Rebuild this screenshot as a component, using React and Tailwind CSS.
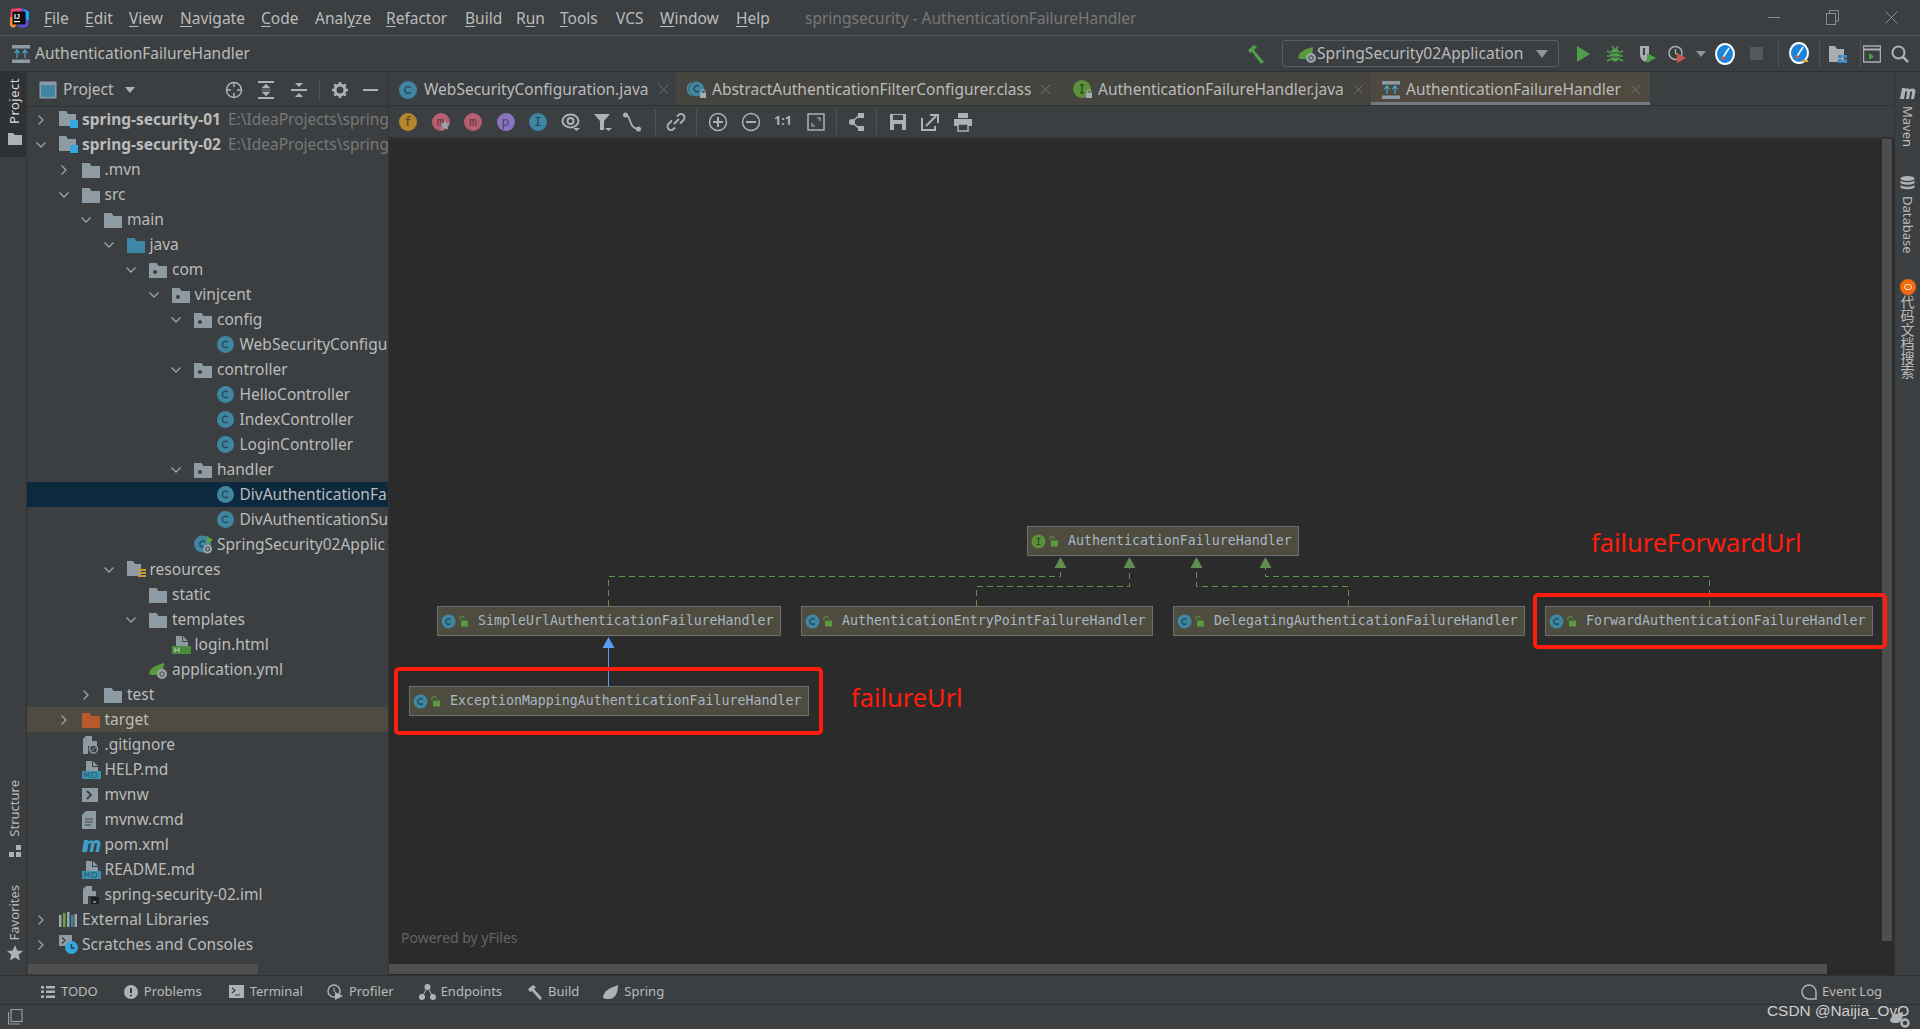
import React from 'react';

const F = { sans: "font-['Noto_Sans','Open_Sans',sans-serif]" };

function Svg({ w = 18, h = 18, vb, children, className = '' }) {
  return (
    <svg width={w} height={h} viewBox={vb || `0 0 ${w} ${h}`} className={`shrink-0 ${className}`}>
      {children}
    </svg>
  );
}

const Chevron = ({ open }) => (
  <Svg w={12} h={12}>
    <path d={open ? 'M1.5 3.5 L6 8 L10.5 3.5' : 'M3.5 1.5 L8 6 L3.5 10.5'} fill="none" stroke="#a0a3a5" strokeWidth="1.3" />
  </Svg>
);

const FolderShape = ({ fill = '#8f9ba3', dot }) => (
  <Svg w={18} h={16}>
    <path d="M0 1h7.5l2 3H18v12H0z" fill={fill} />
    {dot && <circle cx="6" cy="10" r="2" fill="#3c3f41" />}
  </Svg>
);

const ClassC = ({ d = 17, fill = '#3f86a3', letter = '#2b4a58' }) => (
  <Svg w={d} h={d} vb="0 0 17 17">
    <circle cx="8.5" cy="8.5" r="8.5" fill={fill} />
    <path d="M11 6.4 A3.2 3.2 0 1 0 11 10.6" fill="none" stroke={letter} strokeWidth="1.4" />
  </Svg>
);

const DocShape = ({ fill = '#8f9ba3' }) => (
  <path d="M4 0h6v6h6v5H4z M11 0l5 5h-5z" fill={fill} />
);

function TreeIcon({ n }) {
  switch (n) {
    case 'module':
      return (
        <Svg w={20} h={18}>
          <path d="M0 0h7l2 3h8v12H0z" fill="#8f9ba3" />
          <rect x="11" y="9" width="8" height="8" fill="#35a7dc" />
        </Svg>
      );
    case 'folder':
      return <FolderShape />;
    case 'pkg':
      return <FolderShape dot />;
    case 'java':
      return <FolderShape fill="#3f87a6" />;
    case 'target':
      return <FolderShape fill="#b8592c" />;
    case 'class':
      return <ClassC />;
    case 'app':
      return (
        <Svg w={19} h={19}>
          <circle cx="8.5" cy="9" r="8.5" fill="#3f86a3" />
          <path d="M11 7 A3 3 0 1 0 11 11" fill="none" stroke="#2b4a58" strokeWidth="1.4" />
          <path d="M13 1l6 4-6 4z" fill="#59a83a" />
          <circle cx="13.5" cy="14" r="4.5" fill="#9aa5ad" />
          <circle cx="13.5" cy="14" r="2" fill="none" stroke="#3c3f41" />
        </Svg>
      );
    case 'res':
      return (
        <Svg w={19} h={18}>
          <path d="M0 0h6l2 3h6v12H0z" fill="#8f9ba3" />
          <path d="M11 8h8v2h-8zM11 11h8v2h-8zM11 14h8v2h-8z" fill="#c59a3c" />
        </Svg>
      );
    case 'html':
      return (
        <Svg w={19} h={18}>
          <DocShape />
          <rect x="0" y="10" width="19" height="8" fill="#4b8a3a" />
          <path d="M3 11.5v5M7 11.5v5M3 14h4" stroke="#bcd6b0" strokeWidth="1" />
        </Svg>
      );
    case 'spring':
      return (
        <Svg w={19} h={18}>
          <path d="M0 13C1 6 8 4 15 2c0 7-3 12-9 12-2 0-4 0-6-1z" fill="#5a9a3c" />
          <circle cx="13" cy="13" r="5" fill="#9aa5ad" />
          <circle cx="13" cy="13" r="2.2" fill="none" stroke="#3c3f41" />
        </Svg>
      );
    case 'ignore':
      return (
        <Svg w={17} h={18}>
          <path d="M1 3l3-3h5v5H6v13H1z" fill="#8f9ba3" />
          <path d="M5 0h5v5h5v5H5z" fill="#8f9ba3" />
          <circle cx="11.5" cy="13" r="4" fill="#3c3f41" stroke="#9aa5ad" strokeWidth="1.3" />
          <path d="M9 15.5l5-5" stroke="#9aa5ad" />
        </Svg>
      );
    case 'md':
      return (
        <Svg w={19} h={18}>
          <DocShape />
          <rect x="0" y="10" width="19" height="8" fill="#3b8fb0" />
          <path d="M3 16.5v-5l2 3 2-3v5M10 11.5v5h2.5a2.5 2.5 0 0 0 0-5z" fill="none" stroke="#2c5d72" strokeWidth="1" />
        </Svg>
      );
    case 'mvnw':
      return (
        <Svg w={16} h={14}>
          <rect width="16" height="14" fill="#8f9ba3" />
          <path d="M5 3l4 4-4 4" fill="none" stroke="#3c3f41" strokeWidth="2" />
        </Svg>
      );
    case 'txt':
      return (
        <Svg w={14} h={18}>
          <path d="M4 0h10v18H0V4z" fill="#8f9ba3" />
          <path d="M3 8h8M3 11h8M3 14h6" stroke="#3c3f41" strokeWidth="1" />
        </Svg>
      );
    case 'maven':
      return (
        <Svg w={19} h={14}>
          <path d="M0 14L2 2h4l.6 1.5C8 2 10 1.5 11 3.5 13 1.5 18.5 1 18.5 5L17 14h-3.5L15 6c0-1.5-2-1.5-2.500 0L11 14H7.500L9 6c0-1.500-2-1.500-2.500 0L5 14z" fill="#3f9ec9" />
        </Svg>
      );
    case 'iml':
      return (
        <Svg w={17} h={18}>
          <path d="M1 3l3-3h5v5H6v13H1z" fill="#8f9ba3" />
          <path d="M5 0h5v5h4v5H5v8" fill="#8f9ba3" />
          <rect x="9" y="11" width="8" height="7" fill="#1d1f20" />
          <path d="M11 16h3" stroke="#ddd" />
        </Svg>
      );
    case 'libs':
      return (
        <Svg w={18} h={15}>
          <rect x="0" y="3" width="2.500" height="12" fill="#9aa5ad" />
          <rect x="4" y="1" width="2.500" height="14" fill="#62a83e" />
          <rect x="8" y="0" width="2.500" height="15" fill="#9aa5ad" />
          <rect x="12" y="3" width="2.500" height="12" fill="#3f86a3" />
          <rect x="15.500" y="2" width="2.500" height="13" fill="#9aa5ad" />
        </Svg>
      );
    case 'scratch':
      return (
        <Svg w={19} h={19}>
          <rect x="0" y="0" width="13" height="11" fill="#8f9ba3" />
          <path d="M3 2.500l3 3-3 3" fill="none" stroke="#3c3f41" strokeWidth="1.300" />
          <circle cx="12.500" cy="12.500" r="6.500" fill="#35a7dc" />
          <path d="M12.500 9v4h3" fill="none" stroke="#1d3c4c" strokeWidth="1.300" />
        </Svg>
      );
    default:
      return null;
  }
}

const tree = [
  { d: 0, c: 'closed', i: 'module', t: 'spring-security-01', bold: true, path: 'E:\\IdeaProjects\\spring' },
  { d: 0, c: 'open', i: 'module', t: 'spring-security-02', bold: true, path: 'E:\\IdeaProjects\\spring' },
  { d: 1, c: 'closed', i: 'folder', t: '.mvn' },
  { d: 1, c: 'open', i: 'folder', t: 'src' },
  { d: 2, c: 'open', i: 'folder', t: 'main' },
  { d: 3, c: 'open', i: 'java', t: 'java' },
  { d: 4, c: 'open', i: 'pkg', t: 'com' },
  { d: 5, c: 'open', i: 'pkg', t: 'vinjcent' },
  { d: 6, c: 'open', i: 'pkg', t: 'config' },
  { d: 7, i: 'class', t: 'WebSecurityConfigu' },
  { d: 6, c: 'open', i: 'pkg', t: 'controller' },
  { d: 7, i: 'class', t: 'HelloController' },
  { d: 7, i: 'class', t: 'IndexController' },
  { d: 7, i: 'class', t: 'LoginController' },
  { d: 6, c: 'open', i: 'pkg', t: 'handler' },
  { d: 7, i: 'class', t: 'DivAuthenticationFa', sel: true },
  { d: 7, i: 'class', t: 'DivAuthenticationSu' },
  { d: 6, i: 'app', t: 'SpringSecurity02Applic' },
  { d: 3, c: 'open', i: 'res', t: 'resources' },
  { d: 4, i: 'folder', t: 'static' },
  { d: 4, c: 'open', i: 'folder', t: 'templates' },
  { d: 5, i: 'html', t: 'login.html' },
  { d: 4, i: 'spring', t: 'application.yml' },
  { d: 2, c: 'closed', i: 'folder', t: 'test' },
  { d: 1, c: 'closed', i: 'target', t: 'target', ex: true },
  { d: 1, i: 'ignore', t: '.gitignore' },
  { d: 1, i: 'md', t: 'HELP.md' },
  { d: 1, i: 'mvnw', t: 'mvnw' },
  { d: 1, i: 'txt', t: 'mvnw.cmd' },
  { d: 1, i: 'maven', t: 'pom.xml' },
  { d: 1, i: 'md', t: 'README.md' },
  { d: 1, i: 'iml', t: 'spring-security-02.iml' },
  { d: 0, c: 'closed', i: 'libs', t: 'External Libraries' },
  { d: 0, c: 'closed', i: 'scratch', t: 'Scratches and Consoles' },
];

function TreeRow({ r }) {
  const bg = r.sel ? 'bg-[#0d293e]' : r.ex ? 'bg-[#4f4b41]' : '';
  return (
    <div className={`flex h-[25px] items-center overflow-hidden whitespace-nowrap ${bg}`} style={{ paddingLeft: 8 + r.d * 22.5 }}>
      <div className="flex w-[24px] shrink-0 items-center">{r.c && <Chevron open={r.c === 'open'} />}</div>
      <div className="flex w-[23px] shrink-0 items-center justify-start">
        <TreeIcon n={r.i} />
      </div>
      <span className={r.bold ? 'font-bold text-[#bbbbbb]' : 'text-[#bbbbbb]'}>{r.t}</span>
      {r.path && <span className="ml-[7px] text-[#787878]">{r.path}</span>}
    </div>
  );
}

const menus = [
  ['w-[41px]', '', 'F', 'ile'],
  ['w-[44px]', '', 'E', 'dit'],
  ['w-[51px]', '', 'V', 'iew'],
  ['w-[81px]', '', 'N', 'avigate'],
  ['w-[54px]', '', 'C', 'ode'],
  ['w-[71px]', 'Anal', 'y', 'ze'],
  ['w-[79px]', '', 'R', 'efactor'],
  ['w-[51px]', '', 'B', 'uild'],
  ['w-[44px]', 'R', 'u', 'n'],
  ['w-[56px]', '', 'T', 'ools'],
  ['w-[44px]', 'VCS', '', ''],
  ['w-[76px]', '', 'W', 'indow'],
  ['w-[69px]', '', 'H', 'elp'],
];

const Logo = () => (
  <Svg w={20} h={20}>
    <path d="M2 1l9-1 3 3-6 5-7 3z" fill="#f2416f" />
    <path d="M1 10l5-3 3 8-4 5-4-2z" fill="#fb8a2e" />
    <path d="M12 0l8 3-1 15-6 2-5-2 5-10z" fill="#5a4fe0" />
    <path d="M15 1l5 3v9l-4-3z" fill="#1ea7e8" />
    <rect x="3.500" y="3.500" width="13" height="13" fill="#0d0d0d" />
    <text x="5" y="10.500" fill="#fff" fontSize="7" fontWeight="700" fontFamily="Liberation Sans">IJ</text>
    <rect x="5" y="13" width="6" height="1.200" fill="#fff" />
  </Svg>
);

const HierarchyIcon = () => (
  <Svg w={18} h={18}>
    <rect x="0" y="0" width="18" height="3.500" fill="#8f9ba3" />
    <rect x="0" y="14.500" width="18" height="3.500" fill="#8f9ba3" />
    <path d="M5 13V6M2.500 8L5 5l2.500 3M13 13V6M10.500 8L13 5l2.500 3" fill="none" stroke="#3fa7d0" strokeWidth="1.200" />
  </Svg>
);

const TabClose = ({ c = '#6f7274' }) => (
  <Svg w={11} h={11} className="ml-[9px]">
    <path d="M1 1l9 9M10 1l-9 9" stroke={c} strokeWidth="1" />
  </Svg>
);

const LockDot = () => (
  <g>
    <rect x="13" y="13" width="6" height="5" fill="#a5adb3" />
    <path d="M14 13v-1.500a2 2 0 0 1 4 0V13" fill="none" stroke="#a5adb3" />
  </g>
);

function Tabs() {
  return (
    <div className="flex h-[34px] shrink-0 items-stretch border-b border-[#323232] text-[15.500px] text-[#bbbbbb]">
      <div className="flex w-[287px] items-center pl-[10px] pt-[2px]">
        <ClassC d={18} />
        <span className="ml-[7px] whitespace-nowrap">WebSecurityConfiguration.java</span>
        <TabClose />
      </div>
      <div className="flex w-[695px] items-center bg-[#45443e] pt-[2px]">
        <div className="flex w-[386px] items-center pl-[11px]">
          <Svg w={19} h={19}>
            <path d="M4 2.500A8 8 0 0 0 4 15.500" fill="none" stroke="#4a93b0" strokeWidth="1.500" />
            <circle cx="9.500" cy="9" r="7.500" fill="#3f86a3" />
            <path d="M12 6.500A3 3 0 1 0 12 11" fill="none" stroke="#2b4a58" strokeWidth="1.400" />
            <LockDot />
          </Svg>
          <span className="ml-[6px] whitespace-nowrap">AbstractAuthenticationFilterConfigurer.class</span>
          <TabClose />
        </div>
        <div className="flex items-center pl-[11px]">
          <Svg w={19} h={19}>
            <circle cx="9" cy="9" r="9" fill="#5b8f3a" />
            <path d="M7 5h4M9 5v8M7 13h4" stroke="#2f4a20" strokeWidth="1.300" />
            <LockDot />
          </Svg>
          <span className="ml-[6px] whitespace-nowrap">AuthenticationFailureHandler.java</span>
          <TabClose />
        </div>
      </div>
      <div className="flex w-[279px] items-center border-b-[3px] border-[#747a80] bg-[#4e4a3f] pl-[11px] pt-[5px]">
        <HierarchyIcon />
        <span className="ml-[6px] whitespace-nowrap">AuthenticationFailureHandler</span>
        <TabClose />
      </div>
    </div>
  );
}

const Round = ({ c, t, tc, star }) => (
  <div className="relative flex h-[20px] w-[20px] shrink-0 items-center justify-center">
    <div className={`flex h-[18px] w-[18px] items-center justify-center rounded-full font-['DejaVu_Sans_Mono',monospace] text-[13px] leading-none ${c} ${tc}`}>{t}</div>
    {star && (
      <Svg w={12} h={12} vb="8 8 12 12" className="absolute left-[8px] top-[8px]">
        <path d="M14 8l1.500 3.500 3.500.300-2.700 2.300.900 3.500-3.200-1.900-3.200 1.900.900-3.500-2.700-2.300 3.500-.300z" fill="#9aa7b0" />
      </Svg>
    )}
  </div>
);
const Sep = ({ h = 'h-[26px]', cls = '' }) => <div className={`w-px shrink-0 bg-[#515456] ${h} ${cls}`} />;
const G = '#afb1b3';

function DiagramToolbar() {
  return (
    <div className="flex h-[33px] shrink-0 items-center border-b-2 border-[#323232] pl-[9px]">
      <div className="flex items-center gap-[12.500px]">
        <Round c="bg-[#b7862e]" tc="text-[#5c4318]" t="f" />
        <Round c="bg-[#b5606e]" tc="text-[#6b3842]" t="m" star />
        <Round c="bg-[#b5606e]" tc="text-[#6b3842]" t="m" />
        <Round c="bg-[#8a74c0]" tc="text-[#4d3f72]" t="p" />
        <Round c="bg-[#3f86a3]" tc="text-[#1f4a5c]" t="I" />
        <Svg w={20} h={20}>
          <ellipse cx="9.500" cy="9" rx="8" ry="6.500" fill="none" stroke={G} strokeWidth="2" />
          <circle cx="9.500" cy="9" r="3" fill="none" stroke={G} strokeWidth="2" />
          <path d="M12 16h7l-3.500 3z" fill={G} />
        </Svg>
        <Svg w={20} h={20}>
          <path d="M1 2h16l-6 7v9H7V9z" fill={G} />
          <path d="M12 16h7l-3.500 3z" fill={G} />
        </Svg>
      </div>
      <Svg w={20} h={20} className="ml-[9px]">
        <circle cx="3.500" cy="3" r="2.500" fill={G} />
        <circle cx="16.500" cy="17" r="2.500" fill={G} />
        <path d="M3.500 3c6 0 3 14 13 14" fill="none" stroke={G} strokeWidth="1.800" />
      </Svg>
      <Sep cls="ml-[13px]" />
      <Svg w={20} h={20} className="ml-[10px]">
        <path d="M8 12l5-5M11 4.500l1.500-1.500a3.500 3.500 0 0 1 5 5L14 11.500M9 15.500L7.500 17a3.500 3.500 0 0 1-5-5L6 8.500" fill="none" stroke={G} strokeWidth="1.800" />
      </Svg>
      <Sep cls="ml-[10px]" />
      <div className="ml-[11px] flex items-center gap-[12.500px]">
        <Svg w={20} h={20}>
          <circle cx="10" cy="10" r="8.500" fill="none" stroke={G} strokeWidth="1.500" />
          <path d="M5 10h10M10 5v10" stroke={G} strokeWidth="2" />
        </Svg>
        <Svg w={20} h={20}>
          <circle cx="10" cy="10" r="8.500" fill="none" stroke={G} strokeWidth="1.500" />
          <path d="M5 10h10" stroke={G} strokeWidth="2" />
        </Svg>
        <span className={`${F.sans} flex w-[20px] justify-center text-[12.500px] font-bold text-[#afb1b3]`}>1:1</span>
        <Svg w={20} h={20}>
          <rect x="2" y="2" width="16" height="16" fill="none" stroke={G} strokeWidth="1.500" />
          <path d="M11 6h3v3M6 11v3h3" fill="none" stroke={G} strokeWidth="1.200" />
        </Svg>
      </div>
      <Sep cls="ml-[10px]" />
      <Svg w={20} h={20} className="ml-[9px]">
        <circle cx="6" cy="10" r="3" fill={G} />
        <rect x="12" y="1" width="6" height="5" fill={G} />
        <rect x="12" y="14" width="6" height="5" fill={G} />
        <path d="M6 10L13 3.500M6 10l7 6.500" stroke={G} strokeWidth="1.500" />
      </Svg>
      <Sep cls="ml-[10px]" />
      <div className="ml-[11px] flex items-center gap-[12.500px]">
        <Svg w={20} h={20}>
          <path d="M2 2h16v16H2z" fill={G} />
          <rect x="5" y="3" width="10" height="5" fill="#3c3f41" />
          <rect x="6" y="12" width="8" height="6" fill="#3c3f41" />
        </Svg>
        <Svg w={20} h={20}>
          <path d="M2 6v12h13v-4" fill="none" stroke={G} strokeWidth="2" />
          <path d="M6 14L16 4M10 3h8v8" fill="none" stroke={G} strokeWidth="2" />
        </Svg>
        <Svg w={20} h={20}>
          <rect x="5" y="1" width="10" height="5" fill={G} />
          <rect x="1" y="7" width="18" height="7" fill={G} />
          <rect x="5" y="12" width="10" height="7" fill="#3c3f41" stroke={G} strokeWidth="1.500" />
        </Svg>
      </div>
    </div>
  );
}

const NodeIcon = ({ c, letter }) => (
  <Svg w={15} h={15}>
    <circle cx="7.500" cy="7.500" r="7" fill={c} />
    {letter === 'I' ? (
      <path d="M5.500 4.500h4M7.500 4.500v6M5.500 10.500h4" stroke="#2f4a20" strokeWidth="1.100" />
    ) : (
      <path d="M9.700 5.500A2.800 2.800 0 1 0 9.700 9.500" fill="none" stroke="#234656" strokeWidth="1.200" />
    )}
  </Svg>
);
const NodeLock = () => (
  <Svg w={9} h={12} className="ml-[3px]">
    <rect x="2" y="5.500" width="7" height="6" fill="#5b9a3f" />
    <path d="M1 5V3a2 2 0 0 1 4 0v1" fill="none" stroke="#5b9a3f" />
  </Svg>
);

function Node({ pos, name, iface }) {
  return (
    <div className={`absolute flex h-[30px] items-center border border-[#6e6e6e] bg-[#4e4b3f] pl-[3px] ${pos}`}>
      <NodeIcon c={iface ? '#5b8f3a' : '#3f86a3'} letter={iface ? 'I' : 'C'} />
      <NodeLock />
      <span className="ml-[10px] whitespace-nowrap font-['DejaVu_Sans_Mono',monospace] text-[13.280px] text-[#a9b7c6]">{name}</span>
    </div>
  );
}

function Edges() {
  const dash = { fill: 'none', stroke: '#5d9347', strokeWidth: 1, strokeDasharray: '6 4' };
  const tri = (x) => `M${x} 557l6 11h-12z`;
  return (
    <svg className="absolute inset-0" width="1505" height="837" viewBox="389 139 1505 837">
      <path d="M608.500 606V576.500H1060.500V567" {...dash} />
      <path d="M976.500 606V586.500H1129.500V567" {...dash} />
      <path d="M1348.500 606V586.500H1196.500V567" {...dash} />
      <path d="M1709.500 606V576.500H1265.500V567" {...dash} />
      <path d={tri(1060.5)} fill="#5f8f4e" />
      <path d={tri(1129.5)} fill="#5f8f4e" />
      <path d={tri(1196.5)} fill="#5f8f4e" />
      <path d={tri(1265.5)} fill="#5f8f4e" />
      <path d="M608.500 646V686" stroke="#589df6" strokeWidth="1" />
      <path d="M608.500 637l6 11h-12z" fill="#589df6" />
    </svg>
  );
}

function Diagram() {
  return (
    <div className="relative flex-1 overflow-hidden bg-[#2b2b2b]">
      <Edges />
      <Node pos="left-[638px] top-[387px] w-[272px]" name="AuthenticationFailureHandler" iface />
      <Node pos="left-[48px] top-[467px] w-[344px]" name="SimpleUrlAuthenticationFailureHandler" />
      <Node pos="left-[412px] top-[467px] w-[352px]" name="AuthenticationEntryPointFailureHandler" />
      <Node pos="left-[784px] top-[467px] w-[352px]" name="DelegatingAuthenticationFailureHandler" />
      <Node pos="left-[1156px] top-[467px] w-[328px]" name="ForwardAuthenticationFailureHandler" />
      <Node pos="left-[20px] top-[547px] w-[400px]" name="ExceptionMappingAuthenticationFailureHandler" />
      <div className="absolute left-[1493px] top-0 h-[802px] w-[10px] bg-[#4e4e4e]" />
      <div className="absolute left-0 top-[825px] h-[10px] w-[1438px] bg-[#505050]" />
      <div className="absolute left-[5px] top-[528px] h-[68px] w-[429px] rounded-[5px] border-[4px] border-[#ff1d0d]" />
      <div className="absolute left-[1144px] top-[454px] h-[56px] w-[354px] rounded-[5px] border-[4px] border-[#ff1d0d]" />
      <span className="absolute left-[462px] top-[542px] font-['Noto_Sans',sans-serif] text-[25.400px] leading-[32px] text-[#ff1d0d]">failureUrl</span>
      <span className="absolute left-[1202px] top-[387px] font-['Noto_Sans',sans-serif] text-[25.400px] leading-[32px] text-[#ff1d0d]">failureForwardUrl</span>
      <span className={`${F.sans} absolute left-[12px] top-[789px] text-[14px] leading-[20px] text-[#636363]`}>Powered by yFiles</span>
    </div>
  );
}

const Gauge = ({ cls, extra }) => (
  <Svg w={20} h={extra ? 24 : 22} className={cls}>
    <ellipse cx="10" cy="11" rx="10" ry="11" fill="#ffffff" />
    <ellipse cx="10" cy="11" rx="8" ry="9" fill="#1a84dc" />
    <path d="M7 16L14 5" stroke="#fff" strokeWidth="1.500" />
    <circle cx="8" cy="15" r="1.800" fill="#d9523a" />
    {extra && <path d="M13 19h6" stroke="#e2a72e" strokeWidth="2" />}
  </Svg>
);

function NavTools() {
  return (
    <div className="ml-auto flex items-center pr-[11px]">
      <Svg w={20} h={20}>
        <path d="M1 6l6-5 3 2-3 3 10 12-3 2L5 8 3 9z" fill="#4f9f4a" />
      </Svg>
      <div className="ml-[15px] flex h-[27px] w-[277px] items-center rounded-[3px] border border-[#5a5d5f] pl-[15px]">
        <TreeIcon n="spring" />
        <span className="whitespace-nowrap text-[15.600px] text-[#bbbbbb]">SpringSecurity02Application</span>
        <Svg w={12} h={8} className="ml-auto mr-[10px]"><path d="M0 0h12L6 8z" fill="#8f9396" /></Svg>
      </div>
      <Svg w={18} h={18} className="ml-[15px]"><path d="M3 1l13 8-13 8z" fill="#4f9f4a" /></Svg>
      <Svg w={18} h={18} className="ml-[14px]">
        <ellipse cx="9" cy="10" rx="5" ry="6.500" fill="#4f9f4a" />
        <path d="M1 6l4 2M17 6l-4 2M1 11h4M17 11h-4M1 16l4-2M17 16l-4-2M6 1l2 3M12 1l-2 3" stroke="#4f9f4a" strokeWidth="1.500" />
        <path d="M4 8h10M4 12h10" stroke="#3c3f41" />
      </Svg>
      <Svg w={18} h={18} className="ml-[14px]">
        <path d="M2 1h9v8l-3 8c-4-1-6-4-6-8z" fill="#a9aeb1" />
        <path d="M6 3v7" stroke="#3c3f41" strokeWidth="2" />
        <path d="M9 8l9 5-9 5z" fill="#4f9f4a" />
      </Svg>
      <Svg w={18} h={18} className="ml-[12px]">
        <circle cx="7.500" cy="8" r="6.500" fill="none" stroke="#a9aeb1" strokeWidth="1.500" />
        <path d="M7.500 4v4l2 2" fill="none" stroke="#a9aeb1" strokeWidth="1.300" />
        <path d="M9 8l9 5-9 5z" fill="#c75450" />
      </Svg>
      <Svg w={10} h={6} className="ml-[10px]"><path d="M0 0h10L5 6z" fill="#8f9396" /></Svg>
      <Gauge cls="ml-[9px]" />
      <div className="ml-[15px] h-[13px] w-[13px] bg-[#55585a]" />
      <Sep h="h-[27px]" cls="ml-[15px]" />
      <Gauge cls="ml-[10px]" extra />
      <Sep h="h-[27px]" cls="ml-[10px]" />
      <Svg w={18} h={18} className="ml-[9px]">
        <path d="M0 1h6l2 3h7v13H0z" fill="#a9aeb1" />
        <path d="M9 10h4v3H9zM14 10h4v3h-4zM14 14h4v4h-4zM9 14h4v4H9z" fill="#3f86c7" />
      </Svg>
      <Sep h="h-[27px]" cls="ml-[13px]" />
      <Svg w={18} h={18} className="ml-[2px]">
        <rect x="0.500" y="1" width="17" height="16" fill="none" stroke="#a9aeb1" strokeWidth="1.500" />
        <path d="M1 4.500h16" stroke="#a9aeb1" strokeWidth="2" />
        <path d="M6 8l5 3.500L6 15z" fill="#4f9f4a" />
      </Svg>
      <Svg w={18} h={18} className="ml-[10px]">
        <circle cx="7.500" cy="7.500" r="6" fill="none" stroke="#afb1b3" strokeWidth="2" />
        <path d="M12 12l5 5" stroke="#afb1b3" strokeWidth="2.500" />
      </Svg>
    </div>
  );
}

function Bottom() {
  const item = 'flex items-center whitespace-nowrap';
  return (
    <div className="flex h-[29px] shrink-0 items-center border-t border-[#323232] pl-[41px] pt-[4px] text-[13px] text-[#bbbbbb]">
      <div className={item}>
        <Svg w={14} h={14}><path d="M0 1h3v2.500H0zM5 1h9v2.500H5zM0 5.500h3V8H0zM5 5.500h9V8H5zM0 10.500h3V13H0zM5 10.500h9V13H5z" fill="#afb1b3" /></Svg>
        <span className="ml-[6px]">TODO</span>
      </div>
      <div className={`${item} ml-[26px]`}>
        <Svg w={14} h={14}><circle cx="7" cy="7" r="7" fill="#afb1b3" /><path d="M7 3v5" stroke="#3c3f41" strokeWidth="2" /><circle cx="7" cy="10.500" r="1.100" fill="#3c3f41" /></Svg>
        <span className="ml-[6px]">Problems</span>
      </div>
      <div className={`${item} ml-[27px]`}>
        <Svg w={15} h={15}><rect width="15" height="13" fill="#afb1b3" /><path d="M3 3l3 2.500L3 8M6 10h5" fill="none" stroke="#3c3f41" strokeWidth="1.200" /></Svg>
        <span className="ml-[6px]">Terminal</span>
      </div>
      <div className={`${item} ml-[24px]`}>
        <Svg w={16} h={16}><circle cx="7" cy="7" r="6" fill="none" stroke="#afb1b3" strokeWidth="1.500" /><path d="M7 3.500V7l2 2" fill="none" stroke="#afb1b3" /><path d="M8 8l8 4-8 4z" fill="#afb1b3" /></Svg>
        <span className="ml-[6px]">Profiler</span>
      </div>
      <div className={`${item} ml-[25px]`}>
        <Svg w={17} h={16}><circle cx="8.500" cy="3" r="3" fill="#afb1b3" /><circle cx="3" cy="13" r="3" fill="#afb1b3" /><circle cx="14" cy="13" r="3" fill="#afb1b3" /><path d="M8.500 3L3 13M8.500 3L14 13" stroke="#afb1b3" /></Svg>
        <span className="ml-[5px]">Endpoints</span>
      </div>
      <div className={`${item} ml-[25px]`}>
        <Svg w={16} h={16}><path d="M1 5l5-4 3 2-2 2 8 9-2 2L5 7 3 8z" fill="#afb1b3" /></Svg>
        <span className="ml-[5px]">Build</span>
      </div>
      <div className={`${item} ml-[24px]`}>
        <Svg w={15} h={15}><path d="M0 13C0 6 7 3 15 0c0 8-3 14-9 14-2 0-4 0-6-1z" fill="#afb1b3" /></Svg>
        <span className="ml-[6px]">Spring</span>
      </div>
      <div className="ml-auto flex items-center pr-[38px]">
        <Svg w={16} h={16}><path d="M8 1a7 7 0 0 0 0 14h7V8a7 7 0 0 0-7-7z" fill="none" stroke="#afb1b3" strokeWidth="1.500" /></Svg>
        <span className="ml-[5px] whitespace-nowrap">Event Log</span>
      </div>
    </div>
  );
}

export default function App() {
  return (
    <div className={`${F.sans} relative flex h-[1029px] w-[1920px] flex-col overflow-hidden bg-[#3c3f41] text-[15.500px]`}>
      {/* Title bar */}
      <div className="flex h-[36px] shrink-0 items-center border-b border-[#515355] pl-[9px]">
        <Logo />
        <div className="ml-[15px] flex items-center pt-[3px]">
          {menus.map(([w, a, u, b]) => (
            <span key={a + u + b} className={`${w} whitespace-nowrap text-[#bbbbbb]`}>
              {a}
              <span className="underline underline-offset-2">{u}</span>
              {b}
            </span>
          ))}
        </div>
        <span className="whitespace-nowrap pt-[3px] text-[#787878]">springsecurity - AuthenticationFailureHandler</span>
        <div className="ml-auto flex items-center pr-[22px]">
          <div className="h-px w-[12px] bg-[#8a8d8f]" />
          <Svg w={14} h={15} className="ml-[46px]">
            <rect x="0.500" y="3.500" width="9" height="11" fill="none" stroke="#8a8d8f" />
            <path d="M3.500 3V0.500h9V11H10" fill="none" stroke="#8a8d8f" />
          </Svg>
          <Svg w={13} h={13} className="ml-[45px]"><path d="M0.500 0.500l12 12M12.500 0.500l-12 12" stroke="#8a8d8f" /></Svg>
        </div>
      </div>
      {/* Nav bar */}
      <div className="flex h-[36px] shrink-0 items-center border-b border-[#323232] pl-[12px]">
        <HierarchyIcon />
        <span className="ml-[5px] whitespace-nowrap text-[#bbbbbb]">AuthenticationFailureHandler</span>
        <NavTools />
      </div>
      {/* Main */}
      <div className="flex min-h-0 flex-1">
        {/* Left strip */}
        <div className="flex w-[27px] shrink-0 flex-col items-center border-r border-[#323232] text-[#bbbbbb]">
          <div className="flex w-full flex-col items-center bg-[#2f3234] pb-[12px] pl-[3px] pt-[6px]">
            <span className="rotate-180 text-[13px] tracking-[0.5px] text-[#d8d8d8] [writing-mode:vertical-rl]">Project</span>
            <Svg w={14} h={12} className="mt-[9px]"><path d="M0 0h5l2 2h7v10H0z" fill="#afb1b3" /></Svg>
          </div>
          <div className="mt-auto flex flex-col items-center pb-[14px] pl-[3px]">
            <span className="rotate-180 text-[13px] [writing-mode:vertical-rl]">Structure</span>
            <Svg w={14} h={13} className="mt-[8px]"><path d="M8 0h5v5H8zM1 7h5v5H1zM8 7h5v5H8z" fill="#afb1b3" /></Svg>
            <span className="mt-[27px] rotate-180 text-[13px] [writing-mode:vertical-rl]">Favorites</span>
            <Svg w={16} h={16} className="mt-[5px]"><path d="M8 0l2.300 5.500 5.700.500-4.300 3.800 1.300 5.700L8 12.500 3 15.500l1.300-5.700L0 6l5.700-.500z" fill="#afb1b3" /></Svg>
          </div>
        </div>
        {/* Project panel */}
        <div className="flex w-[362px] shrink-0 flex-col border-r border-[#323232]">
          <div className="flex h-[35px] shrink-0 items-center border-b border-[#323232] pl-[12px] pt-[2px] text-[#bbbbbb]">
            <Svg w={18} h={18}>
              <rect x="0.500" y="0.500" width="17" height="17" fill="#8f9ba3" />
              <rect x="2" y="4" width="14" height="12" fill="#3f86a3" />
            </Svg>
            <span className="ml-[6px]">Project</span>
            <Svg w={10} h={6} className="ml-[11px]"><path d="M0 0h10L5 6z" fill="#afb1b3" /></Svg>
            <Svg w={18} h={18} className="ml-[90px]">
              <circle cx="9" cy="9" r="7.500" fill="none" stroke={G} strokeWidth="1.500" />
              <path d="M9 1v5M9 12v5M1 9h5M12 9h5" stroke={G} strokeWidth="1.500" />
            </Svg>
            <Svg w={16} h={18} className="ml-[15px]"><path d="M0 1h16M0 17h16" stroke={G} strokeWidth="2" /><path d="M4 7l4-4 4 4zM4 11l4 4 4-4z M3 9h10" fill={G} stroke={G} strokeWidth="0.500" /></Svg>
            <Svg w={16} h={18} className="ml-[17px]"><path d="M0 9h16" stroke={G} strokeWidth="2" /><path d="M4 2l4 4 4-4zM4 16l4-4 4 4z" fill={G} /></Svg>
            <div className="ml-[12px] h-[20px] w-px bg-[#515456]" />
            <Svg w={16} h={16} className="ml-[12px]">
              <circle cx="8" cy="8" r="5" fill="none" stroke={G} strokeWidth="3" />
              <path d="M8 0v3M8 13v3M0 8h3M13 8h3M2.300 2.300l2 2M11.700 11.700l2 2M2.300 13.700l2-2M11.700 4.300l2-2" stroke={G} strokeWidth="2.500" />
            </Svg>
            <div className="ml-[15px] h-[2px] w-[15px] bg-[#afb1b3]" />
          </div>
          <div className="min-h-0 flex-1 overflow-hidden">
            {tree.map((r, i) => (
              <TreeRow key={i} r={r} />
            ))}
            <div className="ml-[1px] mt-[7px] h-[10px] w-[230px] bg-[#505050]" />
          </div>
        </div>
        {/* Editor */}
        <div className="flex w-[1505px] shrink-0 flex-col">
          <Tabs />
          <DiagramToolbar />
          <Diagram />
        </div>
        {/* Right strip */}
        <div className="flex w-[26px] shrink-0 flex-col items-center border-l border-[#323232] pt-[13px] text-[13px] text-[#bbbbbb]">
          <Svg w={16} h={12} className="mt-[2px]">
            <path d="M0 12L2 1h3l.5 1C7 1 8.500 1 9 2.500 11 1 15.500 1 15.500 4L14 12h-3l1.200-7c0-1-1.500-1-2 0L9 12H6l1.200-7c0-1-1.500-1-2 0L4 12z" fill="#afb1b3" />
          </Svg>
          <span className="mt-[7px] [writing-mode:vertical-rl]">Maven</span>
          <Svg w={15} h={15} className="mt-[29px]">
            <ellipse cx="7.500" cy="2.500" rx="7" ry="2.500" fill="#afb1b3" />
            <path d="M.500 4v2.500c0 3 14 3 14 0V4c0 3-14 3-14 0zM.500 8.500V11c0 3 14 3 14 0V8.500c0 3-14 3-14 0z" fill="#afb1b3" />
          </Svg>
          <span className="mt-[5px] [writing-mode:vertical-rl]">Database</span>
          <div className="mt-[25px] flex h-[16px] w-[16px] items-center justify-center rounded-full bg-[#f26a0f]">
            <div className="h-[6px] w-[8px] rounded-full border border-[#ffe0c8]" />
          </div>
          <span className="font-['Noto_Sans_CJK_SC','Noto_Sans',sans-serif] text-[14px] leading-[18px] [writing-mode:vertical-rl]">代码文档搜索</span>
        </div>
      </div>
      <Bottom />
      {/* Status bar */}
      <div className="flex h-[25px] shrink-0 items-center border-t border-[#323232] pl-[8px]">
        <Svg w={15} h={16}>
          <rect x="3" y="0.500" width="11" height="12" fill="none" stroke="#9a9da0" strokeWidth="1.200" />
          <path d="M0.500 3v12h11" fill="none" stroke="#9a9da0" strokeWidth="1.200" />
        </Svg>
      </div>
      {/* Watermark */}
      <span className="absolute left-[1767px] top-[1001px] font-['Liberation_Sans',sans-serif] text-[15.400px] leading-[20px] text-[#cfcfcf]">CSDN @Naijia_OvO</span>
      <Svg w={20} h={16} className="absolute left-[1890px] top-[1012px]">
        <path d="M0 9C1 3 6 2 13 0c0 7-2 11-7 11-2 0-4 0-6-2z" fill="#b3b5b7" />
        <circle cx="15" cy="11" r="3.500" fill="none" stroke="#b3b5b7" strokeWidth="2.500" />
      </Svg>
    </div>
  );
}
